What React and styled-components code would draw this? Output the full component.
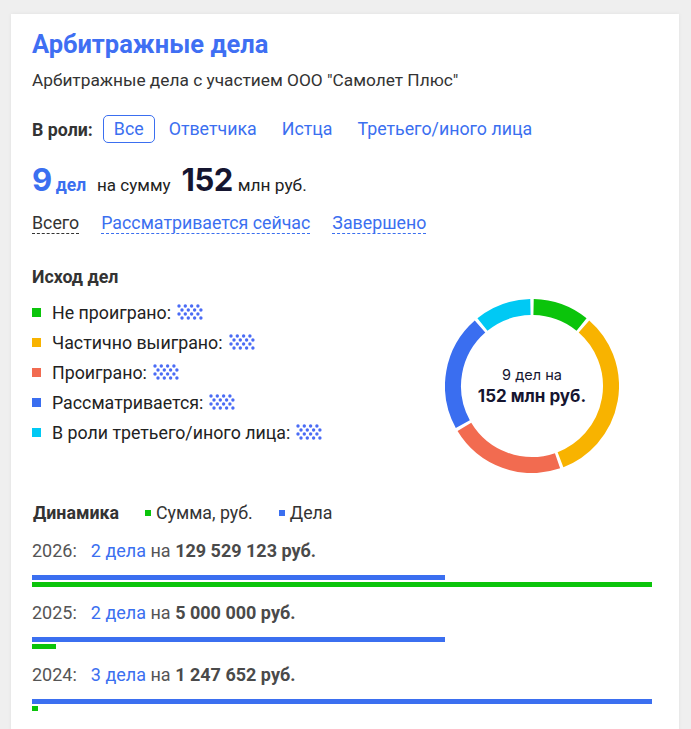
import React from "react";
import styled, { createGlobalStyle } from "styled-components";

const BLUE = "#3b6ff0";
const GREEN = "#0bc40b";

const outcomes = [
    { label: "Не проиграно:", color: GREEN, count: 1 },
    { label: "Частично выиграно:", color: "#f8b300", count: 3 },
    { label: "Проиграно:", color: "#f26b50", count: 2 },
    { label: "Рассматривается:", color: "#3a6ef0", count: 2 },
    { label: "В роли третьего/иного лица:", color: "#00c9f4", count: 1 },
];

const years = [
    { year: "2026", cases: 2, casesLabel: "2 дела", sum: 129529123 },
    { year: "2025", cases: 2, casesLabel: "2 дела", sum: 5000000 },
    { year: "2024", cases: 3, casesLabel: "3 дела", sum: 1247652 },
];

const fmt = (n) => String(n).replace(/\B(?=(\d{3})+(?!\d))/g, " ");

function Dots() {
    const dots = [];
    for (let r = 0; r < 4; r++) {
        for (let c = 0; c < 4; c++) {
            dots.push(<circle key={r + "-" + c} cx={2 + c * 6.3 + (r % 2) * 3} cy={2 + r * 4} r="1.7" />);
        }
    }
    return (
        <DotsIcon width="26" height="16" viewBox="0 0 26 16" fill="#4a6bf5">
            {dots}
        </DotsIcon>
    );
}

function Donut() {
    const total = outcomes.reduce((s, o) => s + o.count, 0);
    const cx = 87, cy = 87, r = 79;
    let start = 0;
    const arcs = outcomes.map((o) => {
        const a0 = (start / total) * 2 * Math.PI;
        start += o.count;
        const a1 = (start / total) * 2 * Math.PI;
        const p = (a) => [cx + r * Math.sin(a), cy - r * Math.cos(a)];
        const [x0, y0] = p(a0 + 0.02);
        const [x1, y1] = p(a1 - 0.02);
        const large = a1 - a0 > Math.PI ? 1 : 0;
        return (
            <path key={o.label} d={`M${x0} ${y0} A${r} ${r} 0 ${large} 1 ${x1} ${y1}`}
                  stroke={o.color} strokeWidth="16" fill="none" />
        );
    });
    return (
        <DonutBox>
            <svg width="174" height="174" viewBox="0 0 174 174">{arcs}</svg>
            <DonutLabel>
                <span>9 дел на</span>
                <strong>152 млн руб.</strong>
            </DonutLabel>
        </DonutBox>
    );
}

export default function App() {
    const maxCases = Math.max(...years.map((y) => y.cases));
    const maxSum = Math.max(...years.map((y) => y.sum));
    return (
        <Page>
            <GlobalStyle />
            <Card>
                <Title>Арбитражные дела</Title>
                <Subtitle>Арбитражные дела с участием ООО "Самолет Плюс"</Subtitle>

                <RoleRow>
                    <RoleLabel>В роли:</RoleLabel>
                    <RoleTab $active>Все</RoleTab>
                    <RoleTab>Ответчика</RoleTab>
                    <RoleTab>Истца</RoleTab>
                    <RoleTab>Третьего/иного лица</RoleTab>
                </RoleRow>

                <CountRow>
                    <BigNum $blue>9</BigNum>
                    <CasesWord>дел</CasesWord>
                    <Plain>на сумму</Plain>
                    <BigNum>152</BigNum>
                    <Unit>млн руб.</Unit>
                </CountRow>

                <StatusRow>
                    <StatusTab $active>Всего</StatusTab>
                    <StatusTab>Рассматривается сейчас</StatusTab>
                    <StatusTab>Завершено</StatusTab>
                </StatusRow>

                <Outcome>
                    <div>
                        <SectionTitle>Исход дел</SectionTitle>
                        <Legend>
                            {outcomes.map((o) => (
                                <LegendItem key={o.label}>
                                    <Swatch $color={o.color} />
                                    {o.label}
                                    <Dots />
                                </LegendItem>
                            ))}
                        </Legend>
                    </div>
                    <Donut />
                </Outcome>

                <DynHeader>
                    <SectionTitle>Динамика</SectionTitle>
                    <Key><Mini $color={GREEN} />Сумма, руб.</Key>
                    <Key><Mini $color={BLUE} />Дела</Key>
                </DynHeader>

                {years.map((y) => (
                    <YearBlock key={y.year}>
                        <YearText>
                            <Year>{y.year}:</Year>
                            <CasesLink>{y.casesLabel}</CasesLink> на <b>{fmt(y.sum)} руб.</b>
                        </YearText>
                        <Bar $color={BLUE} style={{ width: `${(y.cases / maxCases) * 100}%` }} />
                        <Bar $color={GREEN} style={{ width: `${Math.max((y.sum / maxSum) * 100, 1)}%` }} />
                    </YearBlock>
                ))}
            </Card>
        </Page>
    );
}

const GlobalStyle = createGlobalStyle`
    body {
        margin: 0;
        background: #efefef;
        font-family: Roboto, "Liberation Sans", sans-serif;
        color: #222;
    }
`;

const Page = styled.div`
    padding: 14px 12px 0 11px;
    height: 729px;
    box-sizing: border-box;
    overflow: hidden;
`;

const Card = styled.div`
    background: #fff;
    box-shadow: 0 0 4px rgba(0, 0, 0, 0.06);
    padding: 16px 27px 40px 21px;
    min-height: 760px;
`;

const Title = styled.h2`
    margin: 0;
    font-size: 25.5px;
    line-height: 28px;
    font-weight: 700;
    color: #3f6ff3;
`;

const Subtitle = styled.div`
    margin-top: 12px;
    font-size: 17.3px;
    line-height: 20px;
    color: #333;
`;

const RoleRow = styled.div`
    margin-top: 25px;
    display: flex;
    align-items: center;
    gap: 3px;
    height: 28px;
`;

const RoleLabel = styled.span`
    font-weight: 700;
    font-size: 17.8px;
    color: #333;
    margin-right: 7px;
`;

const RoleTab = styled.span`
    font-size: 17.8px;
    color: ${BLUE};
    height: 28px;
    line-height: 26px;
    box-sizing: border-box;
    padding: 0 10px;
    border: 1px solid ${(p) => (p.$active ? BLUE : "transparent")};
    border-radius: 5px;
`;

const CountRow = styled.div`
    margin-top: 19px;
    display: flex;
    align-items: baseline;
    line-height: 36px;
    height: 36px;
`;

const BigNum = styled.span`
    font-family: Inter, Roboto, sans-serif;
    font-size: 31px;
    font-weight: 700;
    color: ${(p) => (p.$blue ? BLUE : "#151530")};
    letter-spacing: -0.5px;
`;

const CasesWord = styled.span`
    font-size: 17.5px;
    font-weight: 700;
    color: ${BLUE};
    margin: 0 11px 0 4px;
`;

const Plain = styled.span`
    font-size: 17px;
    color: #222;
    margin-right: 11px;
`;

const Unit = styled.span`
    font-size: 17.3px;
    color: #222;
    margin-left: 5px;
`;

const StatusRow = styled.div`
    margin-top: 15px;
    display: flex;
    gap: 22px;
`;

const StatusTab = styled.span`
    font-size: 17.8px;
    line-height: 20px;
    color: ${(p) => (p.$active ? "#333" : BLUE)};
    border-bottom: 1px dashed ${(p) => (p.$active ? "#333" : BLUE)};
`;

const Outcome = styled.div`
    margin-top: 33px;
    display: flex;
    justify-content: space-between;
    align-items: flex-start;
`;

const SectionTitle = styled.div`
    font-size: 17.8px;
    line-height: 20px;
    font-weight: 700;
    color: #333;
`;

const Legend = styled.div`
    margin-top: 10px;
    display: flex;
    flex-direction: column;
`;

const LegendItem = styled.div`
    display: flex;
    align-items: center;
    height: 30px;
    font-size: 17.8px;
    color: #222;
`;

const Swatch = styled.span`
    width: 9px;
    height: 9px;
    background: ${(p) => p.$color};
    margin: 0 11px 0 0;
`;

const DotsIcon = styled.svg`
    margin-left: 6px;
`;

const DonutBox = styled.div`
    position: relative;
    width: 174px;
    height: 174px;
    margin: 32px 33px 0 0;
`;

const DonutLabel = styled.div`
    position: absolute;
    inset: 0;
    display: flex;
    flex-direction: column;
    align-items: center;
    justify-content: center;
    color: #151530;
    font-family: Inter, Roboto, sans-serif;
    font-size: 14.5px;
    line-height: 20px;

    strong {
        font-size: 17px;
        font-weight: 700;
        line-height: 22px;
    }
`;

const DynHeader = styled.div`
    margin-top: 30px;
    display: flex;
    align-items: center;
    padding-left: 1px;
`;

const Key = styled.span`
    display: flex;
    align-items: center;
    font-size: 17.8px;
    line-height: 20px;
    color: #333;
    margin-left: 26px;
`;

const Mini = styled.span`
    width: 6px;
    height: 6px;
    background: ${(p) => p.$color};
    margin-right: 5px;
`;

const YearBlock = styled.div`
    margin-top: 18px;
    & + & {
        margin-top: 16px;
    }
`;

const YearText = styled.div`
    font-size: 18px;
    line-height: 20px;
    color: #555;
    margin-bottom: 14px;

    b {
        color: #4a4a4a;
    }
`;

const Year = styled.span`
    margin-right: 14px;
`;

const CasesLink = styled.span`
    color: ${BLUE};
`;

const Bar = styled.div`
    height: 5px;
    background: ${(p) => p.$color};
    margin-bottom: 2px;
`;
